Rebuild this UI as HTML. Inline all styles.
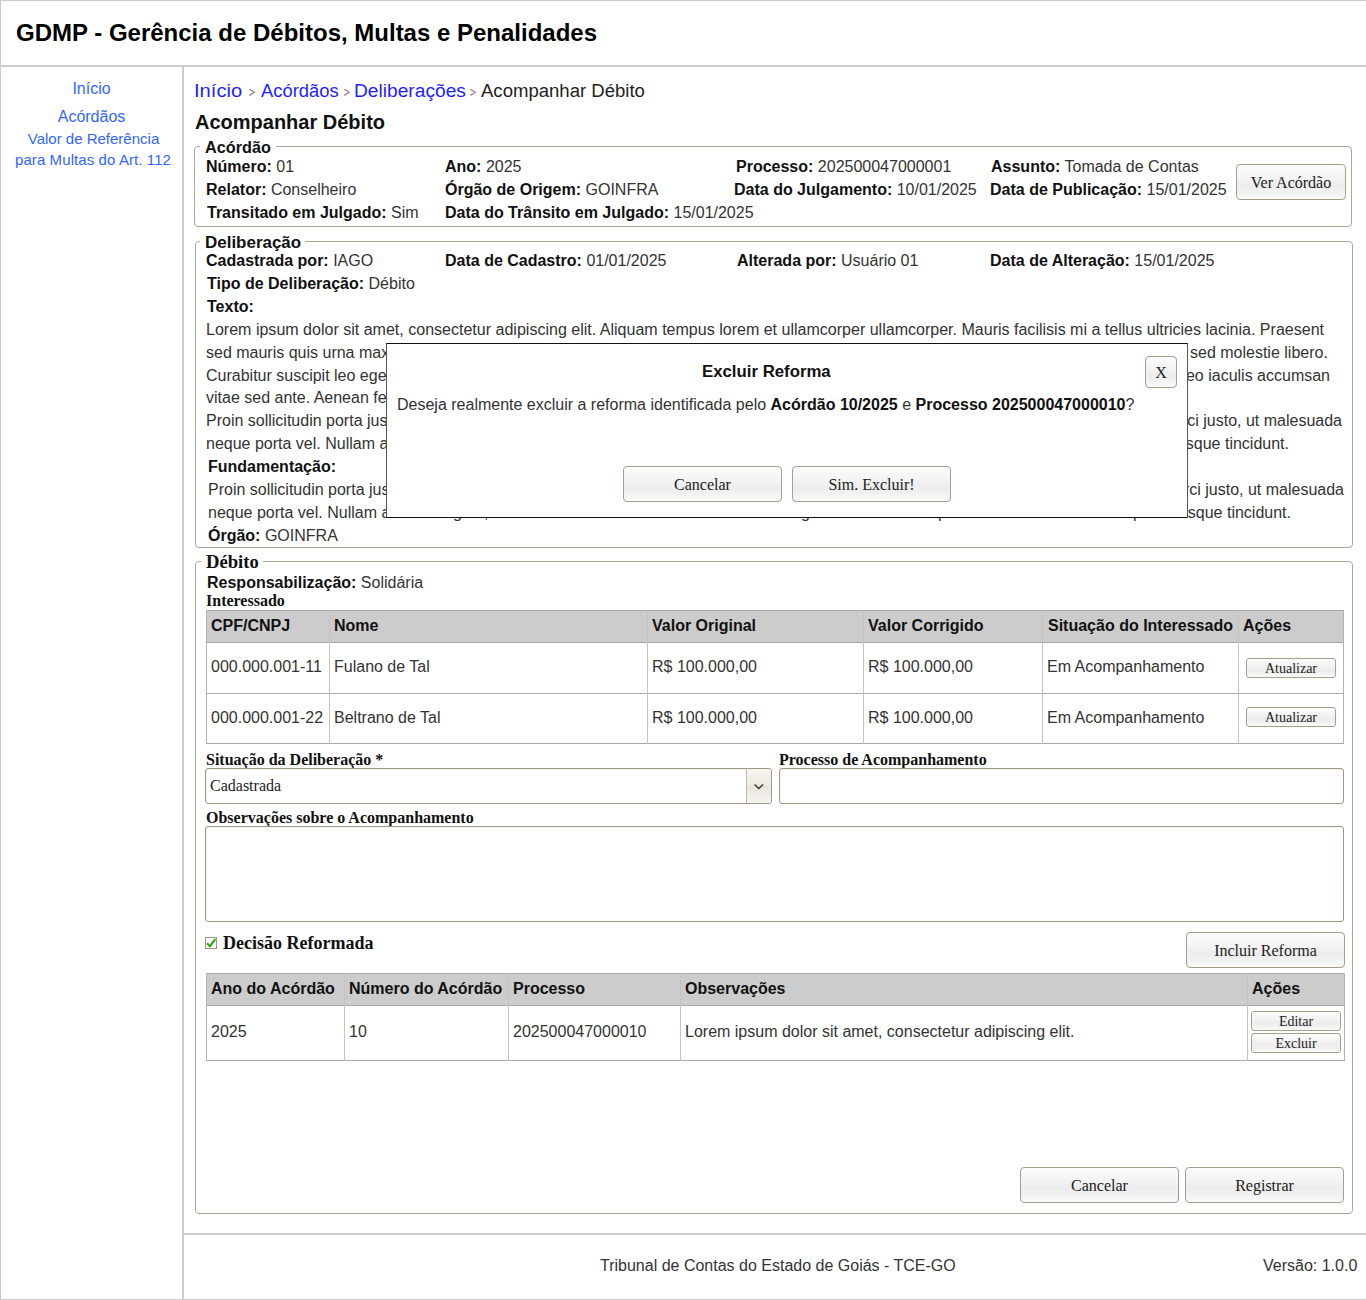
<!DOCTYPE html>
<html lang="pt-BR">
<head>
<meta charset="utf-8">
<title>GDMP - Acompanhar Débito</title>
<style>
html,body{margin:0;padding:0;background:#fff;}
body{width:1366px;height:1300px;overflow:hidden;position:relative;font-family:"Liberation Sans",sans-serif;color:#222;}
.a{position:absolute;}
.t{position:absolute;white-space:nowrap;line-height:1;font-size:16px;}
.b{font-weight:bold;color:#111;}
.v{color:#333;}
.serif{font-family:"Liberation Serif",serif;}
.line{position:absolute;background:#cccccc;}
.fs{position:absolute;border:1px solid #aba996;border-radius:4px;box-sizing:border-box;}
.lg{position:absolute;background:#fff;white-space:nowrap;line-height:1;}
.btn{position:absolute;box-sizing:border-box;border:1px solid #a99d8b;border-radius:4px;
 background:linear-gradient(to bottom,#fbfbfb 0%,#f3f3f3 40%,#ececec 62%,#f4f4f4 85%,#f9f9f9 100%);
 font-family:"Liberation Serif",serif;font-size:16px;color:#222;text-align:center;white-space:nowrap;}
.btn span{position:absolute;left:0;right:0;line-height:1;}
.inp{position:absolute;box-sizing:border-box;border:1px solid #a29684;border-radius:3px;background:#fff;
 box-shadow:inset 1px 1px 1px rgba(0,0,0,0.06);}
.tbl{position:absolute;box-sizing:border-box;}
.hdr{position:absolute;background:#cccccc;}
.hl{position:absolute;height:1px;background:#aaaaaa;}
.vl{position:absolute;width:1px;background:#c4c4c4;}
.vlh{position:absolute;width:1px;background:#b3b3b3;}
.lnk{color:#3366ff;}
</style>
</head>
<body>
<!-- frame lines -->
<div class="line" style="left:0;top:0;width:1366px;height:1px;"></div>
<div class="line" style="left:0;top:0;width:1px;height:1300px;"></div>
<div class="line" style="left:0;top:65px;width:1366px;height:2px;"></div>
<div class="line" style="left:182px;top:67px;width:2px;height:1233px;"></div>
<div class="line" style="left:184px;top:1233px;width:1182px;height:2px;"></div>
<div class="line" style="left:0;top:1299px;width:1366px;height:1px;"></div>

<!-- header -->
<div class="t b" style="left:16px;top:21px;font-size:24px;color:#000;">GDMP - Gerência de Débitos, Multas e Penalidades</div>

<!-- sidebar -->
<div class="t lnk" style="left:0;width:183px;text-align:center;top:81px;">Início</div>
<div class="t lnk" style="left:0;width:183px;text-align:center;top:109px;">Acórdãos</div>
<div class="t lnk" style="left:0;width:187px;text-align:center;top:131px;font-size:15px;">Valor de Referência</div>
<div class="t lnk" style="left:0;width:186px;text-align:center;top:152px;font-size:15px;letter-spacing:0.09px;">para Multas do Art. 112</div>

<!-- breadcrumb -->
<div class="t" style="left:194px;top:82px;font-size:18px;color:#1f1fff;transform:scaleX(1.12);transform-origin:0 0;">Início</div>
<svg class="a" style="left:248px;top:88px;" width="8" height="9" viewBox="0 0 8 9"><path d="M1.3 1.2 L6.3 4.3 L1.3 7.4" fill="none" stroke="#8a8a8a" stroke-width="1.3"/></svg>
<div class="t" style="left:261px;top:82px;font-size:18px;color:#1f1fff;transform:scaleX(1.02);transform-origin:0 0;">Acórdãos</div>
<svg class="a" style="left:343px;top:88px;" width="8" height="9" viewBox="0 0 8 9"><path d="M1.3 1.2 L6.3 4.3 L1.3 7.4" fill="none" stroke="#8a8a8a" stroke-width="1.3"/></svg>
<div class="t" style="left:354px;top:82px;font-size:18px;color:#1f1fff;transform:scaleX(1.065);transform-origin:0 0;">Deliberações</div>
<svg class="a" style="left:469px;top:88px;" width="8" height="9" viewBox="0 0 8 9"><path d="M1.3 1.2 L6.3 4.3 L1.3 7.4" fill="none" stroke="#8a8a8a" stroke-width="1.3"/></svg>
<div class="t" style="left:481px;top:82px;font-size:18px;color:#222;transform:scaleX(1.03);transform-origin:0 0;">Acompanhar Débito</div>
<div class="t b" style="left:195px;top:112px;font-size:20px;color:#111;">Acompanhar Débito</div>

<!-- FIELDSET ACORDAO -->
<div class="fs" style="left:194px;top:146px;width:1158px;height:81px;"></div>
<div class="a" style="left:200px;top:140px;width:76px;height:14px;background:#fff;"></div><div class="t b" style="left:205px;top:140px;transform:scaleX(1.015);transform-origin:0 0;">Acórdão</div>
<div class="t" style="left:206px;top:159px;"><b class="b">Número:</b> <span class="v">01</span></div>
<div class="t" style="left:445px;top:159px;"><b class="b">Ano:</b> <span class="v">2025</span></div>
<div class="t" style="left:736px;top:159px;"><b class="b">Processo:</b> <span class="v">202500047000001</span></div>
<div class="t" style="left:991px;top:159px;"><b class="b">Assunto:</b> <span class="v">Tomada de Contas</span></div>
<div class="t" style="left:206px;top:182px;"><b class="b">Relator:</b> <span class="v">Conselheiro</span></div>
<div class="t" style="left:445px;top:182px;"><b class="b">Órgão de Origem:</b> <span class="v">GOINFRA</span></div>
<div class="t" style="left:734px;top:182px;"><b class="b">Data do Julgamento:</b> <span class="v">10/01/2025</span></div>
<div class="t" style="left:990px;top:182px;"><b class="b">Data de Publicação:</b> <span class="v">15/01/2025</span></div>
<div class="t" style="left:207px;top:205px;"><b class="b">Transitado em Julgado:</b> <span class="v">Sim</span></div>
<div class="t" style="left:445px;top:205px;"><b class="b">Data do Trânsito em Julgado:</b> <span class="v">15/01/2025</span></div>
<div class="btn" style="left:1236px;top:164px;width:110px;height:36px;"><span style="top:10px;">Ver Acórdão</span></div>

<!-- FIELDSET DELIBERACAO -->
<div class="fs" style="left:195px;top:241px;width:1158px;height:307px;"></div>
<div class="a" style="left:200px;top:235px;width:105px;height:14px;background:#fff;"></div><div class="t b" style="left:205px;top:235px;transform:scaleX(1.06);transform-origin:0 0;">Deliberação</div>
<div class="t" style="left:206px;top:253px;"><b class="b">Cadastrada por:</b> <span class="v">IAGO</span></div>
<div class="t" style="left:445px;top:253px;"><b class="b">Data de Cadastro:</b> <span class="v">01/01/2025</span></div>
<div class="t" style="left:737px;top:253px;"><b class="b">Alterada por:</b> <span class="v">Usuário 01</span></div>
<div class="t" style="left:990px;top:253px;"><b class="b">Data de Alteração:</b> <span class="v">15/01/2025</span></div>
<div class="t" style="left:207px;top:276px;"><b class="b">Tipo de Deliberação:</b> <span class="v">Débito</span></div>
<div class="t b" style="left:207px;top:299px;">Texto:</div>
<div class="t v" style="left:206px;top:322px;transform:scaleX(1.0018);transform-origin:0 0;">Lorem ipsum dolor sit amet, consectetur adipiscing elit. Aliquam tempus lorem et ullamcorper ullamcorper. Mauris facilisis mi a tellus ultricies lacinia. Praesent</div>
<div class="t v" style="left:206px;top:345px;">sed mauris quis urna maximus</div>
<div class="t v" style="left:1190px;top:345px;">sed molestie libero.</div>
<div class="t v" style="left:206px;top:368px;">Curabitur suscipit leo eget</div>
<div class="t v" style="right:36px;top:368px;">leo iaculis accumsan</div>
<div class="t v" style="left:206px;top:390px;">vitae sed ante. Aenean fermentum</div>
<div class="t v" style="left:206px;top:413px;">Proin sollicitudin porta justo</div>
<div class="t v" style="right:24px;top:413px;">orci justo, ut malesuada</div>
<div class="t v" style="left:206px;top:436px;">neque porta vel. Nullam auctor</div>
<div class="t v" style="right:77px;top:436px;">scelerisque tincidunt.</div>
<div class="t b" style="left:208px;top:459px;">Fundamentação:</div>
<div class="t v" style="left:208px;top:482px;">Proin sollicitudin porta justo</div>
<div class="t v" style="right:22px;top:482px;">orci justo, ut malesuada</div>
<div class="t v" style="left:208px;top:505px;">neque porta vel. Nullam a</div>
<div class="t v" style="left:453px;top:505px;">g</div>
<div class="t v" style="left:484px;top:505px;">,</div>
<div class="t v" style="left:801px;top:505px;">g</div>
<div class="t v" style="left:938px;top:505px;">p</div>
<div class="t v" style="left:1133px;top:505px;">p</div>
<div class="t v" style="right:75px;top:505px;">scelerisque tincidunt.</div>
<div class="t" style="left:208px;top:528px;"><b class="b">Órgão:</b> <span class="v">GOINFRA</span></div>

<!-- FIELDSET DEBITO -->
<div class="fs" style="left:195px;top:561px;width:1158px;height:653px;"></div>
<div class="a" style="left:201px;top:555px;width:62px;height:14px;background:#fff;"></div><div class="t b serif" style="left:206px;top:553px;font-size:18px;transform:scaleX(1.035);transform-origin:0 0;">Débito</div>
<div class="t" style="left:207px;top:575px;"><b class="b">Responsabilização:</b> <span class="v">Solidária</span></div>
<div class="t b serif" style="left:206px;top:593px;">Interessado</div>

<!-- table 1 -->
<div class="hdr" style="left:206px;top:610px;width:1138px;height:32px;"></div>
<div class="hl" style="left:206px;top:610px;width:1138px;background:#a8a8a8;"></div>
<div class="hl" style="left:206px;top:642px;width:1138px;background:#a8a8a8;"></div>
<div class="hl" style="left:206px;top:693px;width:1138px;"></div>
<div class="hl" style="left:206px;top:743px;width:1138px;"></div>
<div class="vl" style="left:206px;top:610px;height:134px;background:#b3b3b3;"></div>
<div class="vl" style="left:1343px;top:610px;height:134px;background:#b3b3b3;"></div>
<div class="vl" style="left:329px;top:610px;height:134px;"></div>
<div class="vl" style="left:647px;top:610px;height:134px;"></div>
<div class="vl" style="left:863px;top:610px;height:134px;"></div>
<div class="vl" style="left:1042px;top:610px;height:134px;"></div>
<div class="vl" style="left:1238px;top:610px;height:134px;"></div>
<div class="t b" style="left:211px;top:618px;">CPF/CNPJ</div>
<div class="t b" style="left:334px;top:618px;">Nome</div>
<div class="t b" style="left:652px;top:618px;">Valor Original</div>
<div class="t b" style="left:868px;top:618px;">Valor Corrigido</div>
<div class="t b" style="left:1048px;top:618px;">Situação do Interessado</div>
<div class="t b" style="left:1243px;top:618px;">Ações</div>
<div class="t v" style="left:211px;top:659px;">000.000.001-11</div>
<div class="t v" style="left:334px;top:659px;">Fulano de Tal</div>
<div class="t v" style="left:652px;top:659px;">R$ 100.000,00</div>
<div class="t v" style="left:868px;top:659px;">R$ 100.000,00</div>
<div class="t v" style="left:1047px;top:659px;">Em Acompanhamento</div>
<div class="btn" style="left:1246px;top:658px;width:90px;height:20px;font-size:14px;border-radius:3px;"><span style="top:3px;">Atualizar</span></div>
<div class="t v" style="left:211px;top:710px;">000.000.001-22</div>
<div class="t v" style="left:334px;top:710px;">Beltrano de Tal</div>
<div class="t v" style="left:652px;top:710px;">R$ 100.000,00</div>
<div class="t v" style="left:868px;top:710px;">R$ 100.000,00</div>
<div class="t v" style="left:1047px;top:710px;">Em Acompanhamento</div>
<div class="btn" style="left:1246px;top:707px;width:90px;height:20px;font-size:14px;border-radius:3px;"><span style="top:3px;">Atualizar</span></div>

<!-- form -->
<div class="t b serif" style="left:206px;top:752px;">Situação da Deliberação *</div>
<div class="t b serif" style="left:779px;top:752px;">Processo de Acompanhamento</div>
<div class="inp" style="left:205px;top:768px;width:567px;height:36px;"></div>
<div class="a" style="left:746px;top:769px;width:25px;height:34px;box-sizing:border-box;border-left:1px solid #c2b9ac;border-radius:0 3px 3px 0;background:linear-gradient(to bottom,#f7f5f2 0%,#efebe5 40%,#e9e5de 55%,#f1eee9 80%,#f6f4f1 100%);"></div>
<svg class="a" style="left:753px;top:783px;" width="12" height="8" viewBox="0 0 12 8"><path d="M1.6 1.6 L5.8 5.6 L10 1.6" fill="none" stroke="#333" stroke-width="1.35"/></svg>
<div class="t serif" style="left:210px;top:778px;color:#222;">Cadastrada</div>
<div class="inp" style="left:779px;top:768px;width:565px;height:36px;"></div>
<div class="t b serif" style="left:206px;top:810px;">Observações sobre o Acompanhamento</div>
<div class="inp" style="left:205px;top:826px;width:1139px;height:96px;"></div>

<div class="a" style="left:205px;top:937px;width:12px;height:12px;box-sizing:border-box;border:1px solid #a09684;background:#fff;"></div>
<svg class="a" style="left:206px;top:938px;" width="10" height="10" viewBox="0 0 10 10"><path d="M1 5.2 L4 8.2 L9.3 1" fill="none" stroke="#22a800" stroke-width="2"/></svg>
<div class="t b serif" style="left:223px;top:934px;font-size:18px;">Decisão Reformada</div>
<div class="btn" style="left:1186px;top:932px;width:159px;height:36px;"><span style="top:10px;">Incluir Reforma</span></div>

<!-- table 2 -->
<div class="hdr" style="left:206px;top:973px;width:1138px;height:32px;"></div>
<div class="hl" style="left:206px;top:973px;width:1138px;background:#a8a8a8;"></div>
<div class="hl" style="left:206px;top:1005px;width:1138px;background:#a8a8a8;"></div>
<div class="hl" style="left:206px;top:1060px;width:1138px;"></div>
<div class="vl" style="left:206px;top:973px;height:88px;background:#b3b3b3;"></div>
<div class="vl" style="left:1344px;top:973px;height:88px;background:#b3b3b3;"></div>
<div class="vl" style="left:344px;top:973px;height:88px;"></div>
<div class="vl" style="left:508px;top:973px;height:88px;"></div>
<div class="vl" style="left:680px;top:973px;height:88px;"></div>
<div class="vl" style="left:1247px;top:973px;height:88px;"></div>
<div class="t b" style="left:211px;top:981px;">Ano do Acórdão</div>
<div class="t b" style="left:349px;top:981px;">Número do Acórdão</div>
<div class="t b" style="left:513px;top:981px;">Processo</div>
<div class="t b" style="left:685px;top:981px;">Observações</div>
<div class="t b" style="left:1252px;top:981px;">Ações</div>
<div class="t v" style="left:211px;top:1024px;">2025</div>
<div class="t v" style="left:349px;top:1024px;">10</div>
<div class="t v" style="left:513px;top:1024px;">202500047000010</div>
<div class="t v" style="left:685px;top:1024px;">Lorem ipsum dolor sit amet, consectetur adipiscing elit.</div>
<div class="btn" style="left:1251px;top:1011px;width:90px;height:20px;font-size:14px;border-radius:3px;"><span style="top:3px;">Editar</span></div>
<div class="btn" style="left:1251px;top:1033px;width:90px;height:20px;font-size:14px;border-radius:3px;"><span style="top:3px;">Excluir</span></div>

<div class="btn" style="left:1020px;top:1167px;width:159px;height:36px;"><span style="top:10px;">Cancelar</span></div>
<div class="btn" style="left:1185px;top:1167px;width:159px;height:36px;"><span style="top:10px;">Registrar</span></div>

<!-- footer -->
<div class="t v" style="left:600px;top:1258px;">Tribunal de Contas do Estado de Goiás - TCE-GO</div>
<div class="t v" style="left:1263px;top:1258px;">Versão: 1.0.0</div>

<!-- MODAL -->
<div class="a" style="left:386px;top:343px;width:802px;height:175px;box-sizing:border-box;background:#fff;border-top:1px solid #111;border-bottom:1px solid #111;border-left:1px solid #555;border-right:1px solid #555;"></div>
<div class="t b" style="left:702px;top:364px;font-size:16.8px;">Excluir Reforma</div>
<div class="btn" style="left:1145px;top:356px;width:32px;height:32px;"><span style="top:8px;">X</span></div>
<div class="t v" style="left:397px;top:397px;">Deseja realmente excluir a reforma identificada pelo <b class="b">Acórdão 10/2025</b> e <b class="b">Processo 202500047000010</b>?</div>
<div class="btn" style="left:623px;top:466px;width:159px;height:36px;"><span style="top:10px;">Cancelar</span></div>
<div class="btn" style="left:792px;top:466px;width:159px;height:36px;"><span style="top:10px;">Sim. Excluir!</span></div>
</body>
</html>
